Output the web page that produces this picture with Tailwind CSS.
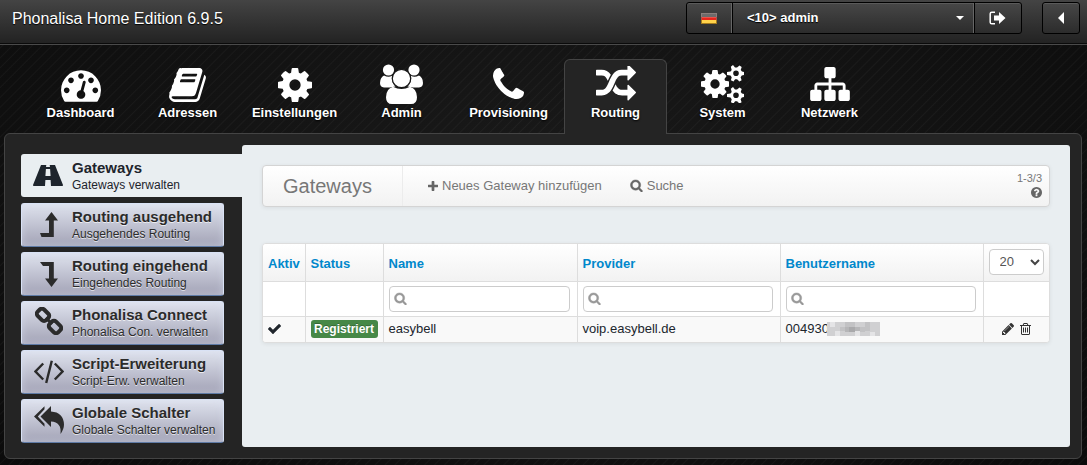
<!DOCTYPE html>
<html lang="de">
<head>
<meta charset="utf-8">
<meta name="viewport" content="width=device-width, initial-scale=1">
<title>Phonalisa Home Edition</title>
<script src="https://cdn.jsdelivr.net/npm/@tailwindcss/browser@4"></script>
</head>
<body class="min-h-screen flex flex-col font-['Liberation_Sans',Arial,sans-serif] text-[13px] leading-5 text-[#20262d] bg-[#151515] bg-[repeating-linear-gradient(135deg,#ffffff00_0px,#ffffff00_5px,#ffffff09_6px,#ffffff00_7px),radial-gradient(ellipse_at_50%_40%,#1a1a1a,#0b0b0b)]">

<svg class="hidden" aria-hidden="true">
  <symbol id="cog" viewBox="128 128 1536 1536"><path d="M1152 896q0-106-75-181t-181-75-181 75-75 181 75 181 181 75 181-75 75-181zm512-109v222q0 12-8 23t-20 13l-185 28q-19 54-39 91 35 50 107 138 10 12 10 25t-9 23q-27 37-99 108t-94 71q-12 0-26-9l-138-108q-44 23-91 38-16 136-29 186-7 28-36 28h-222q-14 0-24.500-8.500t-11.500-21.500l-28-184q-49-16-90-37l-141 107q-10 9-25 9-14 0-25-11-126-114-165-168-7-10-7-23 0-12 8-23 15-21 51-66.500t54-70.500q-27-50-41-99l-183-27q-13-2-21-12.500t-8-23.500v-222q0-12 8-23t19-13l186-28q14-46 39-92-40-57-107-138-10-12-10-24 0-10 9-23 26-36 98.500-107.500t94.500-71.500q13 0 26 10l138 107q44-23 91-38 16-136 29-186 7-28 36-28h222q14 0 24.500 8.500t11.500 21.500l28 184q49 16 90 37l142-107q9-9 24-9 13 0 25 10 129 119 165 170 7 8 7 22 0 12-8 23-15 21-51 66.500t-54 70.500q26 50 41 98l183 28q13 2 21 12.500t8 23.500z"/></symbol>
  <symbol id="search" viewBox="0 0 1792 1792"><path d="M1216 832q0-185-131.500-316.500t-316.500-131.500-316.500 131.500-131.500 316.500 131.500 316.500 316.500 131.500 316.500-131.500 131.500-316.500zm512 832q0 52-38 90t-90 38q-54 0-90-38l-343-342q-179 124-399 124-143 0-273.500-55.500t-225-150-150-225-55.500-273.500 55.500-273.500 150-225 225-150 273.500-55.500 273.500 55.500 225 150 150 225 55.500 273.500q0 220-124 399l343 343q37 37 37 90z"/></symbol>
</svg>

<header class="flex items-start justify-between h-[45px] pl-3 bg-linear-to-b from-[#444] to-[#222] border-b border-[#4a4a4a] shadow-[inset_0_-1px_0_#0a0a0a]">
  <div class="pt-[9px] text-base leading-5 text-white [text-shadow:0_1px_1px_#000]">Phonalisa Home Edition 6.9.5</div>
  <div class="flex gap-5 pt-[2px] pr-[7px] text-white">
    <div class="flex h-8 rounded-[3px] border border-black bg-linear-to-b from-[#474747] to-[#2c2c2c] shadow-[inset_0_1px_0_#5a5a5a]">
      <button class="flex items-center justify-center w-[45px] border-r border-[#666]" aria-label="Sprache: Deutsch">
        <svg width="16" height="11" viewBox="0 0 16 11"><path fill="#8a7f7c" d="M0 0h16v4H0z"/><path fill="#b0524a" d="M0 4h16v3H0z"/><path fill="#a67c1e" d="M0 7h16v4H0z"/><path fill="#4a4646" d="M1 1h14v3H1z"/><path fill="#e8261c" d="M1 4h14v3H1z"/><path fill="#ffd24a" d="M1 7h14v3H1z"/><path fill="#fff" opacity=".2" d="M1 1h14v4H1z"/></svg>
      </button>
      <div class="relative border-l border-r border-l-black border-r-[#666]">
        <select class="appearance-none w-[240px] h-full pl-[14px] font-bold text-[13px] bg-transparent text-white [text-shadow:0_1px_1px_#000]" aria-label="Benutzer"><option>&lt;10&gt; admin</option></select>
        <svg class="absolute right-[9px] top-[13px] pointer-events-none" width="8" height="4" viewBox="0 0 8 4"><path fill="#fff" d="M0 0h8L4 4z"/></svg>
      </div>
      <button class="flex items-center justify-center w-[47px] pr-px border-l border-black" aria-label="Abmelden">
        <svg width="17" height="14" viewBox="0 0 17 14"><path fill="none" stroke="#fff" stroke-width="1.500" d="M6 1.200H2.800Q1.200 1.200 1.200 2.800v8.400q0 1.600 1.600 1.600H6"/><path fill="#fff" d="M5 4.500h5V1l6.500 6L10 13V9.500H5z"/></svg>
      </button>
    </div>
    <button class="flex items-center justify-center w-[38px] h-8 rounded-[3px] border border-black bg-linear-to-b from-[#474747] to-[#2c2c2c] shadow-[inset_0_1px_0_#5a5a5a]" aria-label="Zurück">
      <svg width="6" height="12" viewBox="0 0 6 12"><path fill="#fff" d="M6 0v12L0 6z"/></svg>
    </button>
  </div>
</header>

<nav class="flex gap-1 pl-[29px] pt-[14px] font-bold text-white [text-shadow:0_1px_2px_#000]" aria-label="Hauptmenü">
  <a href="#" class="flex flex-col items-center w-[103px] h-[74px] pt-[5px]"><span class="flex items-center justify-center h-[39px]">
    <svg class="mt-[5px]" width="40" height="32" viewBox="0 256 1792 1408" fill="#fff"><path d="M384 1152q0-53-37.500-90.500t-90.500-37.500-90.500 37.500-37.500 90.500 37.500 90.500 90.500 37.500 90.500-37.500 37.500-90.500zm192-448q0-53-37.500-90.500t-90.500-37.500-90.500 37.500-37.500 90.500 37.500 90.500 90.500 37.500 90.500-37.500 37.500-90.500zm428 481l101-382q6-26-7.500-48.500t-38.500-29.500-48 6.500-30 39.500l-101 382q-60 5-107 43.500t-63 98.500q-20 77 20 146t117 89 146-20 89-117q16-60-6-117t-72-91zm660-33q0-53-37.500-90.500t-90.500-37.500-90.500 37.500-37.500 90.500 37.500 90.500 90.500 37.500 90.500-37.500 37.500-90.500zm-640-640q0-53-37.500-90.500t-90.500-37.500-90.500 37.500-37.500 90.500 37.500 90.500 90.500 37.500 90.500-37.500 37.500-90.500zm448 192q0-53-37.500-90.500t-90.500-37.500-90.500 37.500-37.500 90.500 37.500 90.500 90.500 37.500 90.500-37.500 37.500-90.500zm320 448q0 261-141 483-19 29-54 29h-1402q-35 0-54-29-141-221-141-483 0-182 71-348t191-286 286-191 348-71 348 71 286 191 191 286 71 348z"/></svg></span>Dashboard</a>
  <a href="#" class="flex flex-col items-center w-[103px] h-[74px] pt-[5px]"><span class="flex items-center justify-center h-[39px]">
    <svg class="mt-[2px]" width="37" height="34" viewBox="64 128 1664 1536" fill="#fff"><path d="M1703 478q40 57 18 129l-275 906q-19 64-76.500 107.500t-122.500 43.500h-923q-77 0-148.500-53.500t-99.500-131.500q-24-67-2-127 0-4 3-27t4-37q1-8-3-21.500t-3-19.500q2-11 8-21t16.500-23.500 16.500-23.500q23-38 45-91.500t30-91.500q3-10 .5-30t-.5-28q3-11 17-28t17-23q21-36 42-92t25-90q1-9-2.500-32t.5-28q4-13 22-30.500t22-22.500q19-26 42.500-84.500t27.500-96.500q1-8-3-25.500t-2-26.500q2-8 9-18t18-23 17-21q8-12 16.500-30.500t15-35 16-36 19.500-32 26.500-23.500 36-11.500 47.500 5.500l-1 3q38-9 51-9h761q74 0 114 56t18 130l-274 906q-36 119-71.500 153.500t-128.500 34.500h-869q-27 0-38 15-11 16-1 43 24 70 144 70h923q29 0 56-15.500t35-41.500l300-987q7-22 5-57 38 15 59 43zm-1064 2q-4 13 2 22.500t20 9.500h608q13 0 25.500-9.500t16.500-22.500l21-64q4-13-2-22.500t-20-9.500h-608q-13 0-25.500 9.500t-16.500 22.500zm-83 256q-4 13 2 22.500t20 9.500h608q13 0 25.500-9.500t16.500-22.500l21-64q4-13-2-22.500t-20-9.500h-608q-13 0-25.500 9.500t-16.500 22.500z"/></svg></span>Adressen</a>
  <a href="#" class="flex flex-col items-center w-[103px] h-[74px] pt-[5px]"><span class="flex items-center justify-center h-[39px]">
    <svg class="mt-[2px]" width="34" height="34" fill="#fff"><use href="#cog"/></svg></span>Einstellungen</a>
  <a href="#" class="flex flex-col items-center w-[103px] h-[74px] pt-[5px]"><span class="flex items-center justify-center h-[39px]">
    <svg width="43" height="40" viewBox="0 0 43 40" fill="#fff"><circle cx="8.500" cy="6" r="5.600"/><circle cx="34" cy="6" r="5.600"/><path d="M4 11.500q4.500 2.500 8 .3-1 7 3.500 10.700Q12 23 10 23.500H4q-4-.5-4-4.500 0-5.500 4-7.500zM39 11.500q-4.500 2.500-8 .3 1 7-3.500 10.700 3.500.5 5.500 1h6q4-.5 4-4.500 0-5.500-4-7.500z"/><circle cx="21.500" cy="14.500" r="9.200" stroke="#181818" stroke-width="1.200"/><path d="M13 22.700q8.500 4.500 17 0 7 2 7 10.500 0 6.800-6 6.800H12q-6 0-6-6.800 0-8.500 7-10.500z"/></svg></span>Admin</a>
  <a href="#" class="flex flex-col items-center w-[103px] h-[74px] pt-[5px]"><span class="flex items-center justify-center h-[39px]">
    <svg width="31" height="31" viewBox="192 128 1408 1408" fill="#fff"><path d="M1600 1240q0 27-10 70.500t-21 68.500q-21 50-122 106-94 51-186 51-27 0-53-3.500t-57.500-12.500-47-14.500-55.500-20.500-49-18q-98-35-175-83-127-79-264-216t-216-264q-48-77-83-175-3-9-18-49t-20.500-55.500-14.500-47-12.500-57.500-3.500-53q0-92 51-186 56-101 106-122 25-11 68.500-21t70.500-10q14 0 21 3 18 6 53 76 11 19 30 54t35 63.500 31 53.500q3 4 17.500 25t21.500 35.500 7 28.500q0 20-28.500 50t-62 55-62 53-28.500 46q0 9 5 22.500t8.500 20.500 14 24 11.500 19q76 137 174 235t235 174q2 1 19 11.500t24 14 20.500 8.500 22.500 5q18 0 46-28.500t53-62 55-62 50-28.500q14 0 28.500 7t35.500 21.500 25 17.500q25 15 53.500 31t63.500 35 54 30q70 35 76 53 3 7 3 21z"/></svg></span>Provisioning</a>
  <a href="#" aria-current="page" class="relative z-10 -mb-px flex flex-col items-center w-[103px] h-[75px] pt-1 rounded-t-md border border-b-0 border-[#444] bg-[#242424]"><span class="flex items-center justify-center h-[39px]">
    <svg width="40" height="36" viewBox="0 128 1792 1536" fill="#fff"><path d="M666 481q-60 92-137 273-22-45-37-72.500t-40.500-63.500-51-56.500-63-35-81.500-14.500h-224q-14 0-23-9t-9-23v-192q0-14 9-23t23-9h224q250 0 410 225zm1126 799q0 14-9 23l-320 320q-9 9-23 9-13 0-22.500-9.500t-9.500-22.500v-192q-32 0-85 .5t-81 1-73-1-71-5-64-10.500-63-18.500-58-28.500-59-40-55-53.500-56-69.500q59-93 136-273 22 45 37 72.500t40.500 63.500 51 56.500 63 35 81.500 14.500h256v-192q0-14 9-23t23-9q12 0 24 10l319 319q9 9 9 23zm0-896q0 14-9 23l-320 320q-9 9-23 9-13 0-22.500-9.500t-9.500-22.500v-192h-256q-48 0-87 15t-69 45-51 61.500-45 77.500q-32 62-78 171-29 66-49.500 111t-54 105-64 100-74 83-90 68.500-106.500 42-128 16.500h-224q-14 0-23-9t-9-23v-192q0-14 9-23t23-9h224q48 0 87-15t69-45 51-61.500 45-77.500q32-62 78-171 29-66 49.500-111t54-105 64-100 74-83 90-68.500 106.500-42 128-16.500h256v-192q0-14 9-23t23-9q12 0 24 10l319 319q9 9 9 23z"/></svg></span>Routing</a>
  <a href="#" class="flex flex-col items-center w-[103px] h-[74px] pt-[5px]"><span class="flex items-center justify-center h-[39px]">
    <svg width="43" height="38" viewBox="0 0 43 38" fill="#fff"><use href="#cog" x="0" y="5" width="28" height="28"/><path fill-rule="evenodd" d="M32 0l2 2.600h2L38.500.5l2.200 1.500-1 3 1.300 1.600 2 .4v3l-2.200.5-1.200 1.700 1 3-2.200 1.300-2.300-2.300h-2L32.500 16.500l-2.600-1.300.8-3-1.200-1.700-3.500-.5V7l3.500-.4L30.700 5l-.9-3.200zM35 5.500a2.800 2.800 0 1 0 0 5.600 2.800 2.800 0 0 0 0-5.600z"/><path fill-rule="evenodd" d="M32 22l2 2.600h2l2.500-2.100 2.200 1.500-1 3 1.300 1.600 2 .4v3l-2.200.5-1.200 1.700 1 3-2.200 1.300-2.300-2.300h-2l-1.600 2.300-2.600-1.300.8-3-1.200-1.700-3.500-.5v-3l3.500-.4 1.200-1.600-.9-3.200zM35 27.500a2.800 2.800 0 1 0 0 5.600 2.800 2.800 0 0 0 0-5.600z"/></svg></span>System</a>
  <a href="#" class="flex flex-col items-center w-[103px] h-[74px] pt-[5px]"><span class="flex items-center justify-center h-[39px]">
    <svg class="mt-px" width="40" height="34" viewBox="0 128 1792 1536" fill="#fff"><path d="M1792 1248v320q0 40-28 68t-68 28h-320q-40 0-68-28t-28-68v-320q0-40 28-68t68-28h96v-192h-512v192h96q40 0 68 28t28 68v320q0 40-28 68t-68 28h-320q-40 0-68-28t-28-68v-320q0-40 28-68t68-28h96v-192h-512v192h96q40 0 68 28t28 68v320q0 40-28 68t-68 28h-320q-40 0-68-28t-28-68v-320q0-40 28-68t68-28h96v-192q0-52 38-90t90-38h512v-192h-96q-40 0-68-28t-28-68v-320q0-40 28-68t68-28h320q40 0 68 28t28 68v320q0 40-28 68t-68 28h-96v192h512q52 0 90 38t38 90v192h96q40 0 68 28t28 68z"/></svg></span>Netzwerk</a>
</nav>

<div class="flex flex-1 ml-1 mr-[5px] mb-[6px] rounded-md border border-[#444] bg-[#242424]">
  <aside class="flex flex-col gap-[5px] w-[237px] shrink-0 pl-4 pt-[20px] pb-3 text-[#2b2b2b]">
    <a href="#" aria-current="page" class="flex items-center h-[43px] mb-px rounded-l-[3px] bg-[#e9eef1] text-[#1d242c]">
      <span class="flex justify-center w-[51px] pl-[3px] shrink-0"><svg width="30" height="21" viewBox="0 0 30 21" fill="#1d242c"><path fill-rule="evenodd" d="M8 0h5.300L13 2h4l-.3-2H22l8 20q.2 1-.8 1H18l-.4-6h-5.200L12 21H.8Q-.2 21 0 20zM12.900 4l-.5 7h5.200l-.5-7z"/></svg></span>
      <span class="flex flex-col pt-[2px]"><b class="text-[15px] leading-[18px]">Gateways</b><span class="text-xs leading-[17px]">Gateways verwalten</span></span></a>
    <a href="#" class="flex items-center h-11 mr-[18px] rounded-[3px] border border-[#d9e2f5] border-b-[#5f7ba6] bg-linear-to-b from-[#dfe3ee] to-[#a3a3b6] shadow-[inset_0_0_8px_#dbe3f580] [text-shadow:0_1px_0_#ffffffb0] whitespace-nowrap">
      <span class="flex justify-center w-[50px] pl-[3px] shrink-0"><svg width="18" height="26" viewBox="0 0 18 26" fill="#2b2b2b"><path d="M11.500 0L18 8.500h-4.200V25H1.500L0 21h9V8.500H5z"/></svg></span>
      <span class="flex flex-col pt-px"><b class="text-[15px] leading-[18px]">Routing ausgehend</b><span class="text-xs leading-[17px]">Ausgehendes Routing</span></span></a>
    <a href="#" class="flex items-center h-11 mr-[18px] rounded-[3px] border border-[#d9e2f5] border-b-[#5f7ba6] bg-linear-to-b from-[#dfe3ee] to-[#a3a3b6] shadow-[inset_0_0_8px_#dbe3f580] [text-shadow:0_1px_0_#ffffffb0] whitespace-nowrap">
      <span class="flex justify-center w-[50px] pl-[3px] shrink-0"><svg width="18" height="26" viewBox="0 0 18 26" fill="#2b2b2b"><path d="M11.500 26L18 17.500h-4.200V1H0l3 4h6v12.500H5z"/></svg></span>
      <span class="flex flex-col pt-px"><b class="text-[15px] leading-[18px]">Routing eingehend</b><span class="text-xs leading-[17px]">Eingehendes Routing</span></span></a>
    <a href="#" class="flex items-center h-11 mr-[18px] rounded-[3px] border border-[#d9e2f5] border-b-[#5f7ba6] bg-linear-to-b from-[#dfe3ee] to-[#a3a3b6] shadow-[inset_0_0_8px_#dbe3f580] [text-shadow:0_1px_0_#ffffffb0] whitespace-nowrap">
      <span class="flex justify-center w-[50px] pl-[3px] pb-1 shrink-0"><svg width="28" height="28" viewBox="0 0 28 28" fill="none" stroke="#2b2b2b" stroke-width="4"><rect x="-6" y="-4.500" width="12" height="9" rx="3" transform="translate(8 7.800) rotate(45)"/><rect x="-6" y="-4.500" width="12" height="9" rx="3" transform="translate(20 20) rotate(45)"/><path d="M11 11l6 6" stroke-width="3"/></svg></span>
      <span class="flex flex-col pt-px"><b class="text-[15px] leading-[18px]">Phonalisa Connect</b><span class="text-xs leading-[17px]">Phonalisa Con. verwalten</span></span></a>
    <a href="#" class="flex items-center h-11 mr-[18px] rounded-[3px] border border-[#d9e2f5] border-b-[#5f7ba6] bg-linear-to-b from-[#dfe3ee] to-[#a3a3b6] shadow-[inset_0_0_8px_#dbe3f580] [text-shadow:0_1px_0_#ffffffb0] whitespace-nowrap">
      <span class="flex justify-center w-[50px] pl-[3px] shrink-0"><svg width="30" height="24" viewBox="0 0 30 24" fill="none" stroke="#2b2b2b" stroke-width="2.400"><path d="M9.200 3.500L1.500 11.500l7.700 8M20.800 3.500l7.700 8-7.700 8M17.800.8L12.200 23"/></svg></span>
      <span class="flex flex-col pt-px"><b class="text-[15px] leading-[18px]">Script-Erweiterung</b><span class="text-xs leading-[17px]">Script-Erw. verwalten</span></span></a>
    <a href="#" class="flex items-center h-11 mr-[18px] rounded-[3px] border border-[#d9e2f5] border-b-[#5f7ba6] bg-linear-to-b from-[#dfe3ee] to-[#a3a3b6] shadow-[inset_0_0_8px_#dbe3f580] [text-shadow:0_1px_0_#ffffffb0] whitespace-nowrap">
      <span class="flex justify-center w-[50px] pl-[3px] pb-[2px] shrink-0"><svg width="30" height="28" viewBox="0 0 30 28" fill="#2b2b2b"><path d="M17 0v5.500q12.500.8 13 13 0 4.500-3.500 9.500 1.300-12-9.500-12.500V21L6.500 10.500z"/><path d="M10.500.3v3L3.800 10.500l6.700 7.200v3L0 10.500z"/></svg></span>
      <span class="flex flex-col pt-px"><b class="text-[15px] leading-[18px]">Globale Schalter</b><span class="text-xs leading-[17px]">Globale Schalter verwalten</span></span></a>
  </aside>

  <main class="flex-1 min-w-0 mt-[11px] mb-[11px] mr-[11px] p-5 rounded-[3px] bg-[#e9eef1]">
    <div class="flex items-stretch h-[42px] rounded border border-[#d4d4d4] bg-linear-to-b from-white to-[#f2f2f2] text-[#777] shadow-[0_1px_4px_#00000012]">
      <h1 class="flex items-center pl-5 w-[140px] text-xl border-r border-[#ececec]">Gateways</h1>
      <div class="flex items-center gap-[28px] flex-1 pl-[25px]">
        <a href="#" class="flex items-center gap-1"><svg width="10" height="10" viewBox="192 128 1408 1408" fill="#666"><path d="M1600 736v192q0 40-28 68t-68 28h-416v416q0 40-28 68t-68 28h-192q-40 0-68-28t-28-68v-416h-416q-40 0-68-28t-28-68v-192q0-40 28-68t68-28h416v-416q0-40 28-68t68-28h192q40 0 68 28t28 68v416h416q40 0 68 28t28 68z"/></svg>Neues Gateway hinzufügen</a>
        <a href="#" class="flex items-center gap-1"><svg class="mb-px" width="13" height="13" fill="#666" stroke="#666" stroke-width="60"><use href="#search"/></svg>Suche</a>
      </div>
      <div class="flex flex-col items-end pt-1 pr-[7px] text-[11px] leading-4"><span>1-3/3</span>
        <a href="#" aria-label="Hilfe"><svg class="mt-px" width="11" height="11" viewBox="128 128 1536 1536" fill="#666"><path d="M1024 1376v-192q0-14-9-23t-23-9h-192q-14 0-23 9t-9 23v192q0 14 9 23t23 9h192q14 0 23-9t9-23zm256-672q0-88-55.500-163t-138.500-116-170-41q-243 0-371 213-15 24 8 42l132 100q7 6 19 6 16 0 25-12 53-68 86-92 34-24 86-24 48 0 85.500 26t37.500 59q0 38-20 61t-68 45q-63 28-115.500 86.500t-52.500 125.500v36q0 14 9 23t23 9h192q14 0 23-9t9-23q0-19 21.500-49.500t54.500-49.500q32-18 49-28.500t46-35 44.500-48 28-60.500 12.500-81zm384 192q0 209-103 385.500t-279.500 279.500-385.500 103-385.500-103-279.500-279.500-103-385.500 103-385.500 279.500-279.500 385.500-103 385.500 103 279.500 279.500 103 385.500z"/></svg></a></div>
    </div>

    <div class="mt-9 rounded border border-[#ddd] bg-white overflow-hidden shadow-[0_1px_4px_#00000012]">
      <table class="w-full table-fixed border-collapse">
        <colgroup><col class="w-[42px]"><col class="w-[78px]"><col class="w-[194px]"><col class="w-[203px]"><col><col class="w-[66px]"></colgroup>
        <thead>
          <tr class="h-[37px] text-left bg-linear-to-b from-white to-[#f2f2f2]">
            <th class="pl-[5px] pt-[3px] border-r border-b border-[#ddd]"><a href="#" class="text-[#0088cc]">Aktiv</a></th>
            <th class="pl-[5px] pt-[3px] border-r border-b border-[#ddd]"><a href="#" class="text-[#0088cc]">Status</a></th>
            <th class="pl-[5px] pt-[3px] border-r border-b border-[#ddd]"><a href="#" class="text-[#0088cc]">Name</a></th>
            <th class="pl-[5px] pt-[3px] border-r border-b border-[#ddd]"><a href="#" class="text-[#0088cc]">Provider</a></th>
            <th class="pl-[5px] pt-[3px] border-r border-b border-[#ddd]"><a href="#" class="text-[#0088cc]">Benutzername</a></th>
            <th class="px-[5px] border-b border-[#ddd]"><div class="relative"><select aria-label="Zeilen pro Seite" class="block appearance-none w-full h-[26px] pl-[10px] rounded border border-[#ccc] bg-white text-[13px] font-normal text-[#555]"><option>20</option></select>
              <svg class="absolute right-1 top-[10px] pointer-events-none" width="10" height="7" viewBox="0 0 10 7" fill="none" stroke="#444" stroke-width="2"><path d="M1 1l4 4 4-4"/></svg></div></th>
          </tr>
        </thead>
        <tbody>
          <tr class="h-[35px]">
            <td class="border-r border-b border-[#ddd]"></td>
            <td class="border-r border-b border-[#ddd]"></td>
            <td class="pl-[5px] pr-[7px] border-r border-b border-[#ddd]"><div class="relative"><input type="text" aria-label="Name filtern" class="block w-full h-[26px] pl-6 rounded border border-[#ccc] bg-white"><svg class="absolute left-[5px] top-[6px]" width="13" height="13" fill="#999" stroke="#999" stroke-width="60"><use href="#search"/></svg></div></td>
            <td class="pl-[5px] pr-[7px] border-r border-b border-[#ddd]"><div class="relative"><input type="text" aria-label="Provider filtern" class="block w-full h-[26px] pl-6 rounded border border-[#ccc] bg-white"><svg class="absolute left-[5px] top-[6px]" width="13" height="13" fill="#999" stroke="#999" stroke-width="60"><use href="#search"/></svg></div></td>
            <td class="pl-[5px] pr-[7px] border-r border-b border-[#ddd]"><div class="relative"><input type="text" aria-label="Benutzername filtern" class="block w-full h-[26px] pl-6 rounded border border-[#ccc] bg-white"><svg class="absolute left-[5px] top-[6px]" width="13" height="13" fill="#999" stroke="#999" stroke-width="60"><use href="#search"/></svg></div></td>
            <td class="border-b border-[#ddd]"></td>
          </tr>
          <tr class="h-[26px] bg-[#f9f9f9]">
            <td class="pl-[5px] border-r border-[#ddd]"><svg width="13" height="10" viewBox="121 334 1550 1188" fill="#20262d" role="img" aria-label="aktiv"><path d="M1671 566q0 40-28 68l-724 724-136 136q-28 28-68 28t-68-28l-136-136-362-362q-28-28-28-68t28-68l136-136q28-28 68-28t68 28l294 295 656-657q28-28 68-28t68 28l136 136q28 28 28 68z"/></svg></td>
            <td class="pl-[5px] border-r border-[#ddd]"><span class="block w-[67px] h-[18px] rounded-[3px] bg-[#468847] text-center text-xs leading-[18px] font-bold text-white [text-shadow:0_-1px_0_#00000040]">Registriert</span></td>
            <td class="pl-[5px] border-r border-[#ddd]">easybell</td>
            <td class="pl-[5px] border-r border-[#ddd]">voip.easybell.de</td>
            <td class="pl-[5px] border-r border-[#ddd]"><div class="flex items-center">004930<svg class="-ml-[2px]" width="53" height="14" viewBox="0 0 53 14" role="img" aria-label="verdeckt"><path fill="#d0d0d2" d="M0 0h53v14H0z"/><path fill="#e4e4e6" d="M3 0h5v5H3zM8 9h5v5H8zM28 9h5v5h-5zM43 10h5v4h-5z"/><path fill="#c2c2c4" d="M13 5h5v4h-5zM33 5h5v5h-5zM18 0h10v5H18zM38 0h5v9h-5z"/><path fill="#a9a9ab" d="M22 5h6v5h-6z"/><path fill="#b6b6b8" d="M18 5h4v5h-4zM28 5h5v4h-5z"/></svg></div></td>
            <td><div class="flex items-center justify-center gap-[6px]">
              <a href="#" aria-label="Bearbeiten"><svg width="12" height="12" viewBox="128 149 1515 1515" fill="#333"><path d="M491 1536l91-91-235-235-91 91v107h128v128h107zm523-928q0-22-22-22-10 0-17 7l-542 542q-7 7-7 17 0 22 22 22 10 0 17-7l542-542q7-7 7-17zm-54-192l416 416-832 832h-416v-416zm683 96q0 53-37 90l-166 166-416-416 166-165q36-38 90-38 53 0 91 38l235 234q37 39 37 91z"/></svg></a>
              <a href="#" aria-label="Löschen"><svg width="11" height="12" viewBox="192 128 1408 1536" fill="#333"><path d="M704 736v576q0 14-9 23t-23 9h-64q-14 0-23-9t-9-23v-576q0-14 9-23t23-9h64q14 0 23 9t9 23zm256 0v576q0 14-9 23t-23 9h-64q-14 0-23-9t-9-23v-576q0-14 9-23t23-9h64q14 0 23 9t9 23zm256 0v576q0 14-9 23t-23 9h-64q-14 0-23-9t-9-23v-576q0-14 9-23t23-9h64q14 0 23 9t9 23zm128 724v-948h-896v948q0 22 7 40.500t14.500 27 10.500 8.500h832q3 0 10.500-8.500t14.500-27 7-40.500zm-672-1076h448l-48-117q-7-9-17-11h-317q-10 2-17 11zm928 32v64q0 14-9 23t-23 9h-96v948q0 83-47 143.500t-113 60.500h-832q-66 0-113-58.500t-47-141.500v-952h-96q-14 0-23-9t-9-23v-64q0-14 9-23t23-9h309l70-167q15-37 54-63t79-26h320q40 0 79 26t54 63l70 167h309q14 0 23 9t9 23z"/></svg></a>
            </div></td>
          </tr>
        </tbody>
      </table>
    </div>
  </main>
</div>
</body>
</html>
